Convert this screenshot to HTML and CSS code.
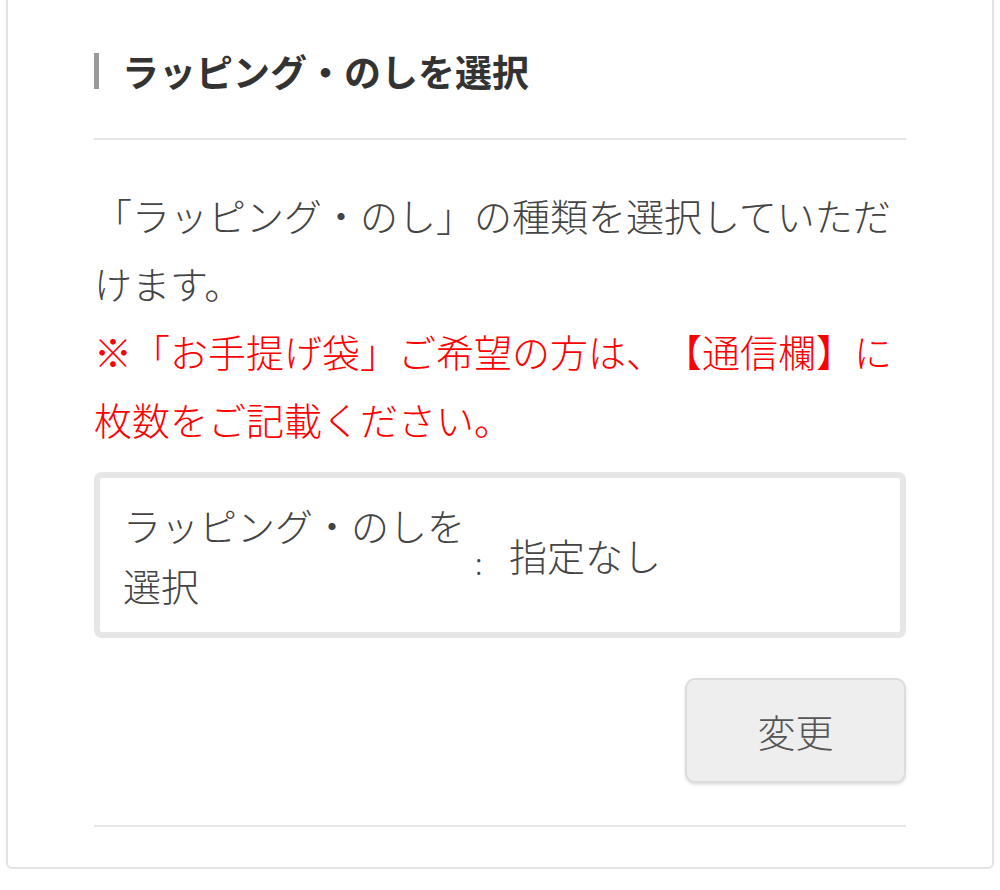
FILE: index.html
```html
<!DOCTYPE html>
<html lang="ja">
<head>
    <meta charset="UTF-8">
    <meta name="viewport" content="width=device-width, initial-scale=1.0">
    <title>ラッピング・のしを選択</title>
    <link rel="stylesheet" href="styles.css">
</head>
<body>
    <div class="card">
        <h2 class="card-title">ラッピング・のしを選択</h2>
        <div class="divider"></div>
        <div class="note">
            <p>「ラッピング・のし」の種類を選択していただけます。</p>
            <p class="note-red">※「お手提げ袋」ご希望の方は、【通信欄】に枚数をご記載ください。</p>
        </div>
        <div class="select-box">
            <div class="select-label">ラッピング・のしを選択</div>
            <div class="select-colon">:</div>
            <div class="select-value">指定なし</div>
        </div>
        <div class="actions">
            <button class="button">変更</button>
        </div>
        <div class="divider divider-bottom"></div>
    </div>
</body>
</html>
```

FILE: styles.css
```css
body {
    margin: 0;
    background-color: #fff;
    font-family: "Noto Sans CJK JP", "Noto Sans", sans-serif;
    color: #444;
    text-spacing-trim: space-all;
}
.card {
    margin: -10px 6px 0 6px;
    padding: 61px 86px 40px 86px;
    border: 2px solid #e3e3e3;
    border-radius: 6px;
}
.card-title {
    margin: 0;
    padding-left: 23px;
    border-left: 5px solid #999;
    font-size: 37px;
    line-height: 36px;
    font-weight: bold;
    color: #333;
}
.divider {
    height: 2px;
    margin-top: 49px;
    background-color: #e6e6e6;
}
.note {
    margin-top: 41px;
    font-size: 38px;
    line-height: 68px;
    font-weight: 300;
}
.note p {
    margin: 0;
}
.note-red {
    color: #ff0000;
}
.select-box {
    display: flex;
    align-items: center;
    margin-top: 19px;
    padding: 17px 20px 17px 23px;
    border: 6px solid #e6e6e6;
    border-radius: 8px;
    font-size: 38px;
    line-height: 60px;
    font-weight: 300;
}
.select-label {
    flex: 0 0 352px;
}
.select-colon {
    flex: 0 0 34px;
    margin-top: 14px;
    font-size: 30px;
}
.actions {
    display: flex;
    justify-content: flex-end;
    margin-top: 40px;
}
.button {
    width: 221px;
    height: 105px;
    border: 2px solid #dcdcdc;
    border-radius: 10px;
    background-color: #eee;
    box-shadow: 0 2px 3px rgba(0, 0, 0, 0.12);
    font-family: "Noto Sans CJK JP", sans-serif;
    font-size: 38px;
    font-weight: 300;
    color: #555;
    cursor: pointer;
}
.divider-bottom {
    margin-top: 42px;
}
```
